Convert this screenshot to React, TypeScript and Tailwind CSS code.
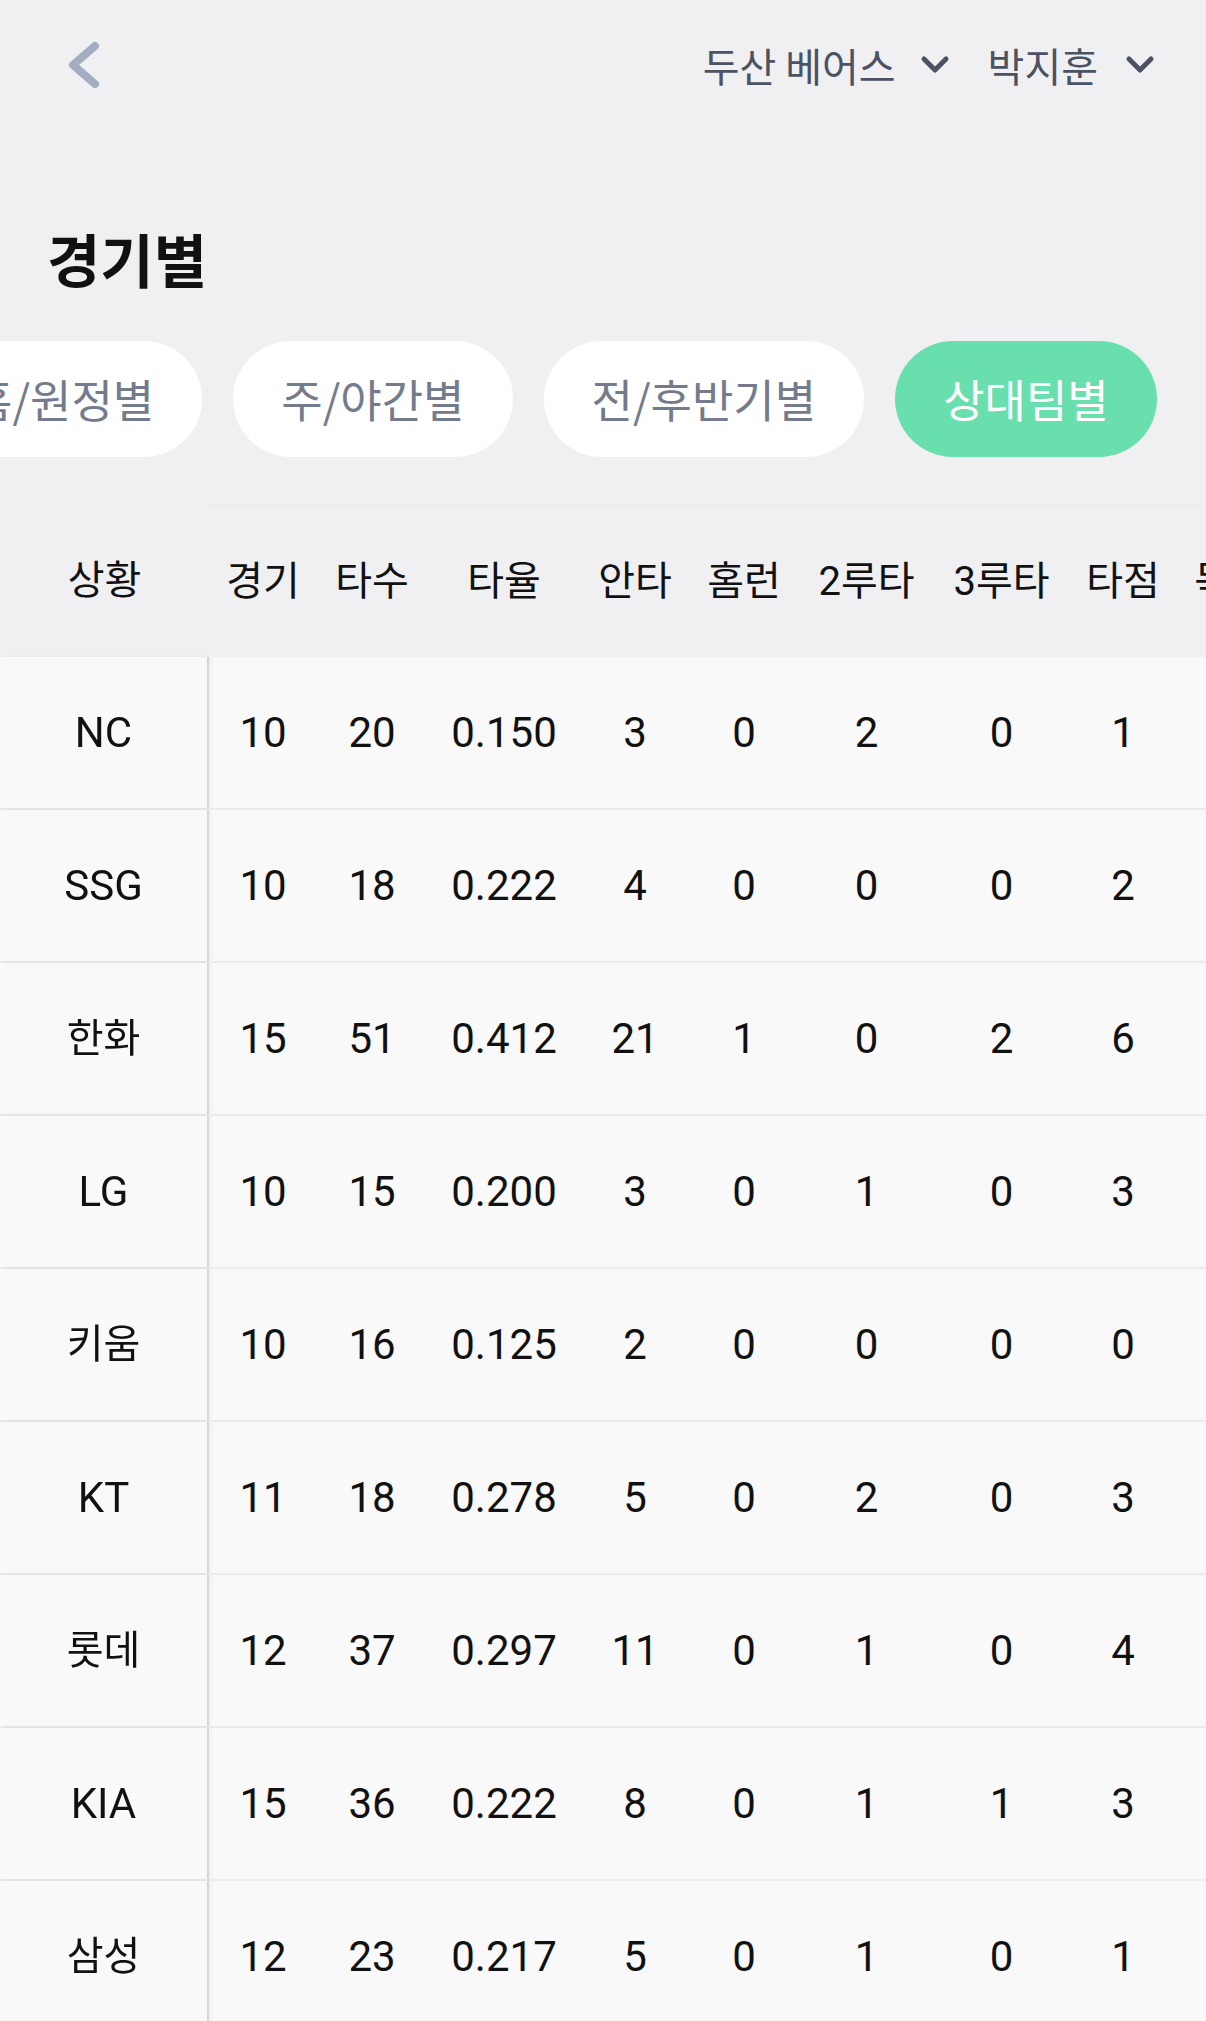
import { useLayoutEffect, useRef } from 'react';

const tabs = ['홈/원정별', '주/야간별', '전/후반기별', '상대팀별'];
const activeTab = '상대팀별';

const columns = [
  { label: '상황', width: 'w-[209px]' },
  { label: '경기', width: 'w-[108px]' },
  { label: '타수', width: 'w-[110px]' },
  { label: '타율', width: 'w-[154px]' },
  { label: '안타', width: 'w-[108px]' },
  { label: '홈런', width: 'w-[110px]' },
  { label: '2루타', width: 'w-[135px]' },
  { label: '3루타', width: 'w-[135px]' },
  { label: '타점', width: 'w-[108px]' },
  { label: '득점', width: 'w-[108px]' },
  { label: '도루', width: 'w-[108px]' },
  { label: '볼넷', width: 'w-[108px]' },
  { label: '삼진', width: 'w-[108px]' },
];

const rows: string[][] = [
  ['NC', '10', '20', '0.150', '3', '0', '2', '0', '1', '2', '0', '3', '5'],
  ['SSG', '10', '18', '0.222', '4', '0', '0', '0', '2', '1', '0', '2', '4'],
  ['한화', '15', '51', '0.412', '21', '1', '0', '2', '6', '8', '1', '5', '7'],
  ['LG', '10', '15', '0.200', '3', '0', '1', '0', '3', '1', '0', '2', '6'],
  ['키움', '10', '16', '0.125', '2', '0', '0', '0', '0', '1', '0', '1', '5'],
  ['KT', '11', '18', '0.278', '5', '0', '2', '0', '3', '2', '1', '2', '3'],
  ['롯데', '12', '37', '0.297', '11', '0', '1', '0', '4', '5', '0', '4', '8'],
  ['KIA', '15', '36', '0.222', '8', '0', '1', '1', '3', '4', '1', '3', '9'],
  ['삼성', '12', '23', '0.217', '5', '0', '1', '0', '1', '2', '0', '2', '6'],
];

const hasKorean = (text: string) => /[가-힣]/.test(text);

function ChevronDown() {
  return (
    <svg width="30" height="20" viewBox="0 0 30 20" fill="none" className="shrink-0">
      <path d="M4 4 L15 15 L26 4" stroke="#4b5262" strokeWidth="5" strokeLinecap="round" strokeLinejoin="round" />
    </svg>
  );
}

function TopBar() {
  return (
    <div className="flex h-[130px] items-center justify-between pl-[65px] pr-[51px]">
      <svg width="36" height="52" viewBox="0 0 36 52" fill="none">
        <path d="M30 7 L8 26 L30 45" stroke="#a3aec2" strokeWidth="8" strokeLinecap="round" strokeLinejoin="round" />
      </svg>
      <div className="flex items-center text-[40px] text-[#4b5262]">
        <span>두산 베어스</span>
        <span className="ml-[24px]">
          <ChevronDown />
        </span>
        <span className="ml-[38px]">박지훈</span>
        <span className="ml-[27px]">
          <ChevronDown />
        </span>
      </div>
    </div>
  );
}

function Tabs() {
  const scroller = useRef<HTMLDivElement>(null);

  useLayoutEffect(() => {
    const el = scroller.current;
    if (el) el.scrollLeft = el.scrollWidth;
  }, []);

  return (
    <div ref={scroller} className="mt-[52px] overflow-x-auto [scrollbar-width:none]">
      <div className="flex w-max gap-[31px] pl-[47px]">
        {tabs.map((tab) => {
          const active = tab === activeTab;
          return (
            <button
              key={tab}
              type="button"
              className={
                active
                  ? 'flex h-[116px] shrink-0 items-center rounded-full bg-[#6adfae] px-12 text-[45px] text-white'
                  : 'flex h-[116px] shrink-0 items-center rounded-full bg-white px-12 text-[45px] text-[#737b8c]'
              }
            >
              {tab}
            </button>
          );
        })}
        <div className="w-[18px] shrink-0" />
      </div>
    </div>
  );
}

function StatsTable() {
  return (
    <div className="mt-[48px] overflow-x-auto [scrollbar-width:none] font-[Roboto,'Noto_Sans_CJK_KR',sans-serif] text-[#111111]">
      <div className="w-max">
        <div className="flex h-[152px]">
          {columns.map((col, index) => (
            <div
              key={col.label}
              className={
                index === 0
                  ? `sticky left-0 z-10 flex ${col.width} shrink-0 items-center justify-center bg-[#f0f0f3] text-[40px]`
                  : `flex ${col.width} shrink-0 items-center justify-center border-t border-[#eaeaed] text-[40px]`
              }
            >
              {col.label}
            </div>
          ))}
        </div>
        {rows.map((row) => (
          <div key={row[0]} className="flex h-[153px] border-b-2 border-[#ececec] bg-[#f9f9f9]">
            {row.map((value, index) => (
              <div
                key={index}
                className={
                  index === 0
                    ? `sticky left-0 z-10 flex w-[209px] shrink-0 items-center justify-center border-r-2 border-[#d6d6d6] bg-[#f9f9f9] shadow-[2px_0_4px_rgba(0,0,0,0.05)] ${hasKorean(value) ? 'text-[40px]' : 'text-[42px]'}`
                    : `flex ${columns[index].width} shrink-0 items-center justify-center text-[42px]`
                }
              >
                {value}
              </div>
            ))}
          </div>
        ))}
      </div>
    </div>
  );
}

export default function App() {
  return (
    <div className="h-[2021px] overflow-hidden bg-[#f0f0f3] font-['Noto_Sans_CJK_KR',sans-serif]">
      <TopBar />
      <h1 className="mt-[97px] h-[62px] pl-[47px] text-[58px] leading-[62px] font-bold text-[#111111]">경기별</h1>
      <Tabs />
      <StatsTable />
    </div>
  );
}
